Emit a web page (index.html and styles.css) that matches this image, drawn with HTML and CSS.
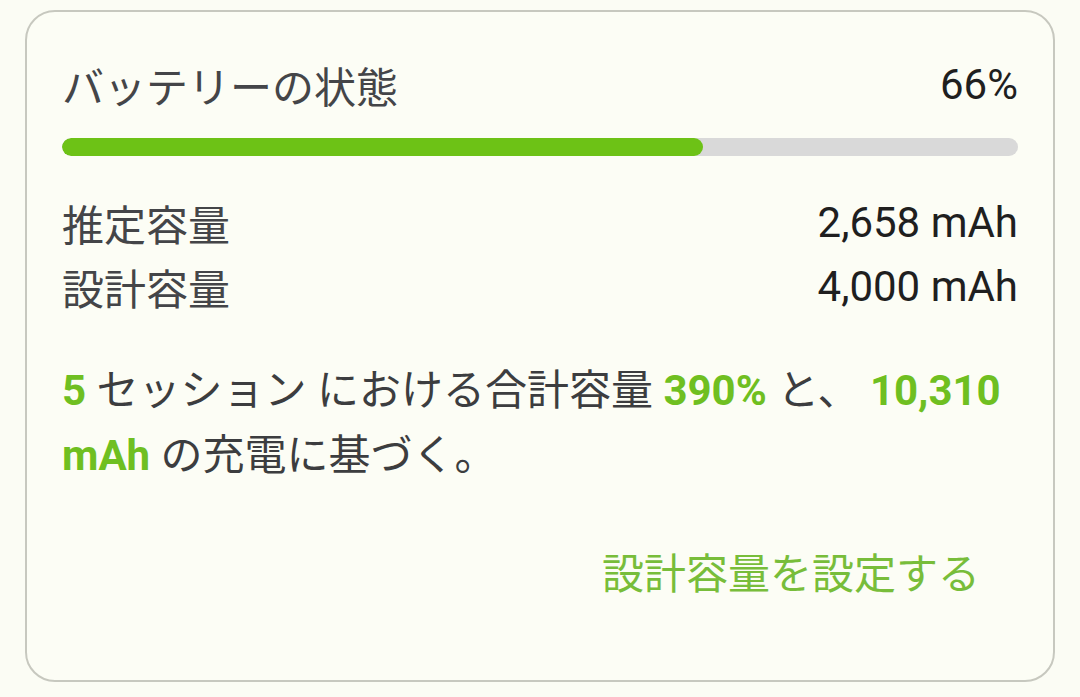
FILE: index.html
```html
<!DOCTYPE html>
<html lang="ja">
<head>
<meta charset="utf-8">
<link rel="stylesheet" href="styles.css">
</head>
<body>
<div class="card">
  <div class="row title-row">
    <span class="title">バッテリーの状態</span>
    <span class="pct">66%</span>
  </div>
  <div class="track"><div class="fill" style="width:67%"></div></div>
  <div class="rows">
    <div class="row"><span class="label">推定容量</span><span class="value">2,658 mAh</span></div>
    <div class="row"><span class="label">設計容量</span><span class="value">4,000 mAh</span></div>
  </div>
  <p class="note"><b class="hl">5</b> セッション における合計容量 <b class="hl">390%</b> と、 <b class="hl">10,310</b><br><b class="hl">mAh</b> の充電に基づく。</p>
  <div class="actions">
    <button class="link">設計容量を設定する</button>
  </div>
</div>
</body>
</html>
```

FILE: styles.css
```css
html, body {
  margin: 0;
  padding: 0;
  background: #fbfcf4;
}
body {
  font-family: "Roboto", "Noto Sans CJK JP", sans-serif;
  font-size: 42px;
  color: #3c3d3f;
}
.card {
  box-sizing: border-box;
  margin: 10px 25px 0 25px;
  width: 1030px;
  height: 672px;
  border: 2px solid #c7c8bf;
  border-radius: 30px;
  padding: 36px 35px 0 35px;
  background: #fcfdf5;
}
.row {
  display: flex;
  justify-content: space-between;
  align-items: center;
  height: 64px;
}
.title-row {
  height: 72px;
}
.title, .label {
  color: #444548;
}
.pct, .value {
  color: #1f1f1f;
}
.track {
  margin-top: 18px;
  height: 18px;
  border-radius: 9px;
  background: #d9d9d9;
  overflow: hidden;
}
.fill {
  height: 100%;
  border-radius: 9px;
  background: #6dc216;
}
.rows {
  margin-top: 34px;
}
.note {
  margin: 40px 0 0 0;
  line-height: 65px;
  color: #3c3d3f;
}
.hl {
  color: #6fbf21;
  font-weight: 700;
}
.actions {
  display: flex;
  justify-content: flex-end;
  margin-top: 55px;
}
.link {
  font: inherit;
  font-size: 42px;
  color: #78bd3a;
  background: none;
  border: 0;
  padding: 0 38px 0 0;
  height: 64px;
  line-height: 64px;
}
```
